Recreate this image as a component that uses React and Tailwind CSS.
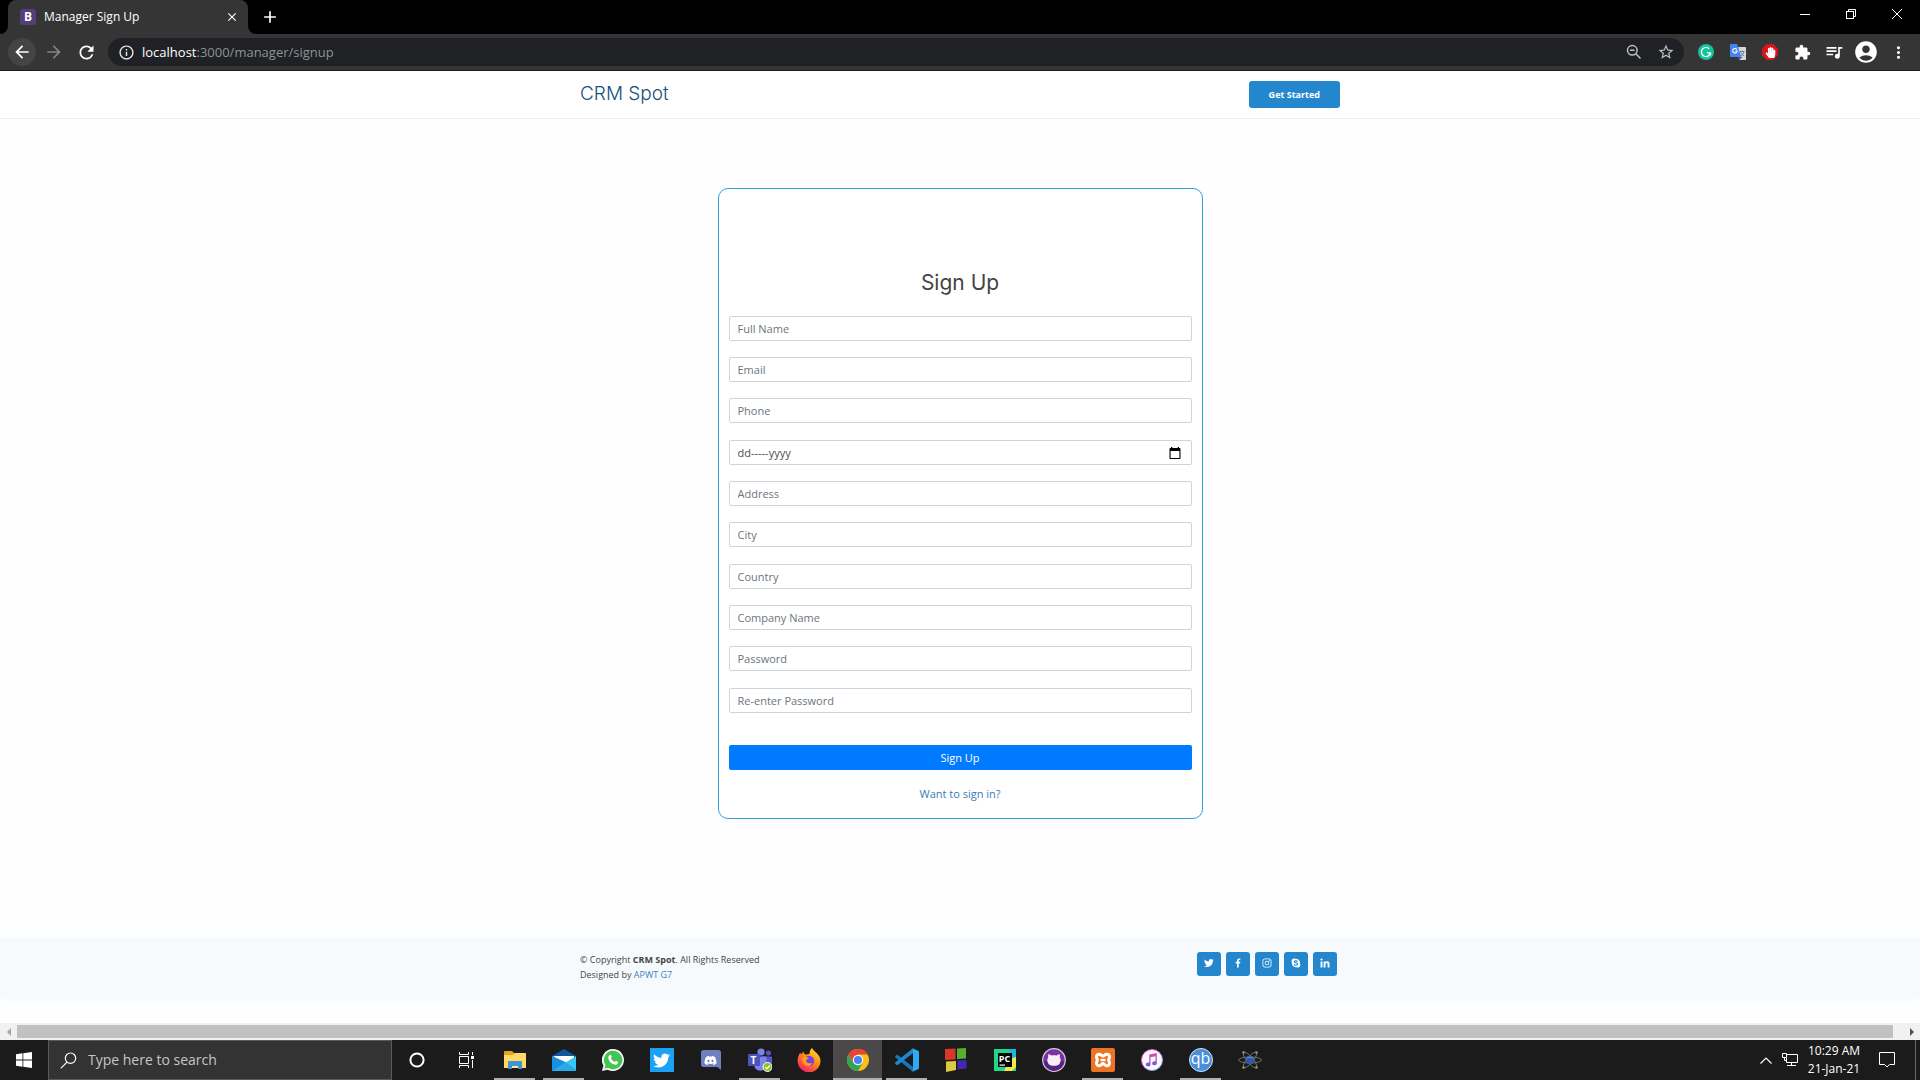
import React from "react";
import {
  MdAccountCircle,
  MdAdd,
  MdArrowBack,
  MdArrowForward,
  MdClose,
  MdExtension,
  MdInfoOutline,
  MdMoreVert,
  MdQueueMusic,
  MdRefresh,
  MdStarBorder,
} from "react-icons/md";
import {
  BiLogoFacebook,
  BiLogoInstagram,
  BiLogoLinkedin,
  BiLogoSkype,
  BiLogoTwitter,
} from "react-icons/bi";
import { FaTwitter, FaDiscord, FaHandPaper } from "react-icons/fa";

/* ---------- Browser window ---------- */

function RestoreIcon() {
  return (
    <svg width="10" height="10" viewBox="0 0 10 10" fill="none" stroke="currentColor">
      <path d="M2.5 2.5V.5h7v7h-2" />
      <rect x=".5" y="2.5" width="7" height="7" />
    </svg>
  );
}

function TabStrip() {
  return (
    <div className="flex h-[34px] items-start bg-black pl-2 text-white">
      <div className="relative flex h-full w-60 items-center rounded-t-lg bg-[#353535] pr-2 pl-3">
        <svg className="absolute bottom-0 -left-2" width="8" height="8" viewBox="0 0 8 8">
          <path d="M8 0v8H0a8 8 0 0 0 8-8z" fill="#353535" />
        </svg>
        <svg className="absolute -right-2 bottom-0" width="8" height="8" viewBox="0 0 8 8">
          <path d="M0 0v8h8a8 8 0 0 1-8-8z" fill="#353535" />
        </svg>
        <span className="flex h-4 w-4 items-center justify-center rounded-[3px] bg-[#563d7c] text-xs leading-4 font-bold">
          B
        </span>
        <span className="ml-2 flex-1 text-xs">Manager Sign Up</span>
        <button aria-label="Close tab" className="flex h-4 w-4 items-center justify-center">
          <MdClose size={14} />
        </button>
      </div>
      <button aria-label="New tab" className="ml-3 flex h-full w-5 items-center justify-center">
        <MdAdd size={20} />
      </button>
      <div className="ml-auto flex">
        <button aria-label="Minimize" className="flex h-7 w-[46px] items-center justify-center">
          <svg width="10" height="10" viewBox="0 0 10 10" stroke="currentColor">
            <path d="M0 5.5h10" />
          </svg>
        </button>
        <button aria-label="Restore" className="flex h-7 w-[46px] items-center justify-center">
          <RestoreIcon />
        </button>
        <button aria-label="Close" className="flex h-7 w-[46px] items-center justify-center">
          <svg width="10" height="10" viewBox="0 0 10 10" stroke="currentColor">
            <path d="M0 0l10 10M10 0L0 10" />
          </svg>
        </button>
      </div>
    </div>
  );
}

function ZoomOutIcon() {
  return (
    <svg width="16" height="16" viewBox="0 0 16 16" fill="none" stroke="currentColor" strokeWidth="1.500">
      <circle cx="6.300" cy="6.300" r="4.800" />
      <path d="M9.800 9.800l4.700 4.700M4 6.300h4.600" />
    </svg>
  );
}

function GrammarlyIcon() {
  return (
    <svg width="16" height="16" viewBox="0 0 16 16" fill="none">
      <circle cx="8" cy="8" r="8" fill="#15c39a" />
      <path d="M11.3 4.8A4.6 4.6 0 1 0 12.5 9M9 8.8h3.5v2.4" stroke="#fff" strokeWidth="1.3" />
    </svg>
  );
}

function TranslateIcon() {
  return (
    <svg width="16" height="16" viewBox="0 0 16 16">
      <path d="M6 3h9.3a.7.7 0 0 1 .7.7v11.6a.7.7 0 0 1-.7.7H9.500z" fill="#d5d8dc" />
      <path d="M9.500 16l3-3H8.600z" fill="#3a62b8" />
      <path d="M.7 0H7l4.500 13H.7a.7.7 0 0 1-.7-.7V.7A.7.7 0 0 1 .7 0z" fill="#4383f2" />
      <path d="M7 5.600A2.300 2.300 0 1 0 7.300 7H5.200" fill="none" stroke="#fff" strokeWidth="1.100" />
      <path d="M10 7.500h4.500M12.200 6.500v1M13.800 7.500c-.3 2-1.500 3.500-2.600 4.300M11 8.500c.7 1.600 1.800 2.600 3.200 3.500" fill="none" stroke="#6b7280" strokeWidth=".9" />
    </svg>
  );
}

function AdBlockIcon() {
  return (
    <span className="relative flex h-4 w-4 items-center justify-center">
      <svg className="absolute inset-0" width="16" height="16" viewBox="0 0 16 16">
        <path d="M4.700 0h6.600L16 4.700v6.600L11.300 16H4.700L0 11.300V4.700z" fill="#d8141c" />
      </svg>
      <FaHandPaper size={11} className="relative text-white" />
    </span>
  );
}

function Toolbar() {
  return (
    <div className="flex h-[37px] items-center border-b border-[#1f1b1c] bg-[#353535] pr-1.5 pl-2 text-white">
      <div className="flex items-center gap-1">
        <button aria-label="Back" className="flex h-7 w-7 items-center justify-center rounded-full bg-[#444444]">
          <MdArrowBack size={20} />
        </button>
        <button aria-label="Forward" className="flex h-7 w-7 items-center justify-center text-[#848484]">
          <MdArrowForward size={20} />
        </button>
        <button aria-label="Reload" className="flex h-7 w-7 items-center justify-center">
          <MdRefresh size={21} />
        </button>
      </div>
      <div className="ml-2 flex h-7 flex-1 items-center rounded-full bg-[#202124] pr-0.5 pl-2.5">
        <MdInfoOutline size={17} className="text-gray-200" />
        <p className="ml-[7px] flex-1 text-[13px] leading-5 text-[#8f9296]">
          <span className="text-white">localhost</span>:3000/manager/signup
        </p>
        <button aria-label="Zoom" className="flex w-8 justify-center text-[#bdc1c6]">
          <ZoomOutIcon />
        </button>
        <button aria-label="Bookmark this tab" className="flex w-8 justify-center text-[#bdc1c6]">
          <MdStarBorder size={18} />
        </button>
      </div>
      <div className="ml-1.5 flex items-center">
        <button aria-label="Grammarly" className="flex w-8 justify-center"><GrammarlyIcon /></button>
        <button aria-label="Google Translate" className="flex w-8 justify-center"><TranslateIcon /></button>
        <button aria-label="AdBlock" className="flex w-8 justify-center"><AdBlockIcon /></button>
        <button aria-label="Extensions" className="flex w-8 justify-center"><MdExtension size={17} /></button>
        <button aria-label="Media controls" className="flex w-8 justify-center"><MdQueueMusic size={20} /></button>
        <button aria-label="Profile" className="flex w-8 justify-center"><MdAccountCircle size={26} /></button>
        <button aria-label="Menu" className="flex w-8 justify-center"><MdMoreVert size={19} /></button>
      </div>
    </div>
  );
}

/* ---------- Web page ---------- */

const fields = [
  { name: "fullName", label: "Full Name", type: "text" },
  { name: "email", label: "Email", type: "email" },
  { name: "phone", label: "Phone", type: "tel" },
  { name: "birthDate", label: "dd-----yyyy", type: "date" },
  { name: "address", label: "Address", type: "text" },
  { name: "city", label: "City", type: "text" },
  { name: "country", label: "Country", type: "text" },
  { name: "company", label: "Company Name", type: "text" },
  { name: "password", label: "Password", type: "password" },
  { name: "passwordAgain", label: "Re-enter Password", type: "password" },
];

function DateField({ name, label }) {
  return (
    <div className="relative">
      <input
        name={name}
        type="text"
        aria-label="Date of birth"
        placeholder={label}
        className="block h-[25px] w-full rounded-xs border border-[#ced4da] bg-white px-2 text-[11px] leading-4 text-[#495057] placeholder:text-[#495057] placeholder:opacity-100"
      />
      <button type="button" aria-label="Open calendar" className="absolute top-1/2 right-[11px] -translate-y-1/2 text-black">
        <svg width="12" height="12" viewBox="0 0 12 12" fill="currentColor">
          <path d="M2 0h1.300v1h5.400V0H10v1h.5c.6 0 1 .4 1 1v9c0 .6-.4 1-1 1h-9c-.6 0-1-.4-1-1V2c0-.6.4-1 1-1H2zM1.600 4v6.900h8.800V4z" fillRule="evenodd" />
        </svg>
      </button>
    </div>
  );
}

function SignUpForm() {
  return (
    <form
      className="w-full max-w-[485px] rounded-[10px] border border-[#2da3e0] bg-white px-2.5 pt-20 pb-4"
      onSubmit={(event) => event.preventDefault()}
    >
      <h1 className="mb-[19px] text-center font-['Inter','Liberation_Sans',sans-serif] text-[21px] leading-7 text-[#444444]">
        Sign Up
      </h1>
      <div>
        {fields.map((field) => (
          <div key={field.name} className="mb-4 nth-[3n]:mb-[17px]">
            {field.type === "date" ? (
              <DateField name={field.name} label={field.label} />
            ) : (
              <input
                name={field.name}
                type={field.type}
                aria-label={field.label}
                placeholder={field.label}
                className="block h-[25px] w-full rounded-xs border border-[#ced4da] bg-white px-2 text-[11px] leading-4 text-[#495057] placeholder:text-[#6c757d] placeholder:opacity-100"
              />
            )}
          </div>
        ))}
      </div>
      <button type="submit" className="mt-8 block h-[25px] w-full rounded-xs bg-[#007bff] text-[11px] leading-4 text-white">
        Sign Up
      </button>
      <p className="mt-4 text-center text-[11px] leading-4">
        <a href="#signin" className="text-[#3b7ab5]">Want to sign in?</a>
      </p>
    </form>
  );
}

const socials = [
  { name: "Twitter", Icon: BiLogoTwitter },
  { name: "Facebook", Icon: BiLogoFacebook },
  { name: "Instagram", Icon: BiLogoInstagram },
  { name: "Skype", Icon: BiLogoSkype },
  { name: "LinkedIn", Icon: BiLogoLinkedin },
];

function WebPage() {
  return (
    <div className="flex flex-1 flex-col bg-[#fefefe]">
      <header className="border-b border-[#e6f2fb] bg-white">
        <div className="mx-auto flex h-[47px] max-w-[760px] items-center justify-between">
          <a href="#home" className="pb-0.5 font-['Inter','Liberation_Sans',sans-serif] text-[19px] leading-6 font-light text-[#16507b]">
            CRM Spot
          </a>
          <a href="#start" className="flex h-[27px] items-center rounded-[3px] bg-[#2487ce] px-5 text-[9px] leading-3 font-bold text-white">
            Get Started
          </a>
        </div>
      </header>
      <main className="flex flex-1 items-start justify-center pt-[69px]">
        <SignUpForm />
      </main>
      <footer className="mb-6 bg-[#f6fafd] shadow-[0_0_10px_#f6fafd]">
        <div className="mx-auto flex max-w-[760px] items-start justify-between pt-3.5 pr-[3px] pb-[17px]">
          <div className="text-[9px] leading-[15px] text-[#444444]">
            <p>© Copyright <strong className="font-bold">CRM Spot</strong>. All Rights Reserved</p>
            <p>Designed by <a href="#team" className="text-[#3b82c4]">APWT G7</a></p>
          </div>
          <div className="flex gap-[5px]">
            {socials.map(({ name, Icon }) => (
              <a key={name} href={"#" + name.toLowerCase()} aria-label={name} className="flex h-6 w-6 items-center justify-center rounded-[3px] bg-[#2487ce] pb-0.5 text-white">
                <Icon size={12} />
              </a>
            ))}
          </div>
        </div>
      </footer>
      <div className="flex h-[17px] items-center bg-[#f1f1f1]">
        <button aria-label="Scroll left" className="flex w-[17px] justify-center text-[#a3a3a3]">
          <svg width="4" height="8" viewBox="0 0 4 8" fill="currentColor"><path d="M4 0v8L0 4z" /></svg>
        </button>
        <div className="h-[13px] flex-1 bg-[#c1c1c1]" />
        <button aria-label="Scroll right" className="flex w-[27px] justify-end pr-1.5 text-[#505050]">
          <svg width="4" height="8" viewBox="0 0 4 8" fill="currentColor"><path d="M0 0v8l4-4z" /></svg>
        </button>
      </div>
    </div>
  );
}

/* ---------- Task bar ---------- */

function CortanaIcon() {
  return (
    <svg width="16" height="16" viewBox="0 0 16 16" fill="none">
      <circle cx="8" cy="8" r="6.600" stroke="#fff" strokeWidth="2" />
    </svg>
  );
}

function TaskViewIcon() {
  return (
    <svg width="16" height="16" viewBox="0 0 16 16" fill="none" stroke="#fff">
      <path d="M1.500 0v2.500h9V0M1.500 16v-2.500h9V16M1.500 4.500h9v7h-9zM14.500 0v3M14.500 8v8" />
      <path d="M13 4h3v3h-3z" fill="#fff" stroke="none" />
    </svg>
  );
}

function ExplorerIcon() {
  return (
    <svg width="22" height="20" viewBox="0 0 22 20">
      <path d="M0 2a1 1 0 0 1 1-1h7l2 2h11a1 1 0 0 1 1 1v3H0z" fill="#e0a816" />
      <path d="M0 5h9l2-2h10a1 1 0 0 1 1 1v14H0z" fill="#ffd868" />
      <path d="M4 12a1 1 0 0 1 1-1h12a1 1 0 0 1 1 1v7h-4v-3H8v3H4z" fill="#3d95d6" />
      <path d="M8 16h6v2H8z" fill="#ffe9a8" />
    </svg>
  );
}

function MailIcon() {
  return (
    <svg width="24" height="22" viewBox="0 0 24 22">
      <path d="M0 7l12-7 12 7v3H0z" fill="#11559c" />
      <path d="M2 7h20v9H2z" fill="#fff" />
      <path d="M0 7l12 7.500L24 7v14a1 1 0 0 1-1 1H1a1 1 0 0 1-1-1z" fill="#38c6f4" />
      <path d="M0 7v14l.6 1L14 13.200z" fill="#1b8fdc" />
      <path d="M.6 22L14 13.200 24 21l-1 1z" fill="#27a9ea" />
    </svg>
  );
}

function WhatsAppIcon() {
  return (
    <span className="relative flex h-[22px] w-[22px] items-center justify-center">
      <svg className="absolute inset-0" width="22" height="22" viewBox="0 0 22 22">
        <path d="M11 0a11 11 0 1 1-5.200 20.700L0 22l1.400-5.500A11 11 0 0 1 11 0z" fill="#f4f4f4" />
        <path d="M11 1.800a9.200 9.200 0 1 1-4.800 17L2.500 19.700l1-3.600A9.200 9.200 0 0 1 11 1.800z" fill="#43c553" />
      </svg>
      <svg className="relative" width="12" height="12" viewBox="0 0 12 12">
        <path d="M3 .8c.6-.4 1 0 1.200.5l.6 1.500c.1.5-.7 1-.8 1.400.7 1.600 2 2.900 3.700 3.600.5-.1 1-1 1.400-.9l1.800.9c.3.2.2 1-.1 1.600-.6 1-2 1.500-3.300 1.200C4.300 9.800 1.900 7.400 1.300 4.300 1 2.800 1.900 1.500 3 .8z" fill="#fff" />
      </svg>
    </span>
  );
}

function TwitterTile() {
  return (
    <span className="flex h-6 w-6 items-center justify-center bg-[#1da1f2] text-white">
      <FaTwitter size={17} />
    </span>
  );
}

function DiscordIcon() {
  return (
    <span className="relative flex h-5 w-5 items-center justify-center">
      <svg className="absolute inset-0" width="20" height="20" viewBox="0 0 20 20">
        <path d="M2.500 0h15A2.500 2.500 0 0 1 20 2.500V20l-3.500-3h-14A2.500 2.500 0 0 1 0 14.500v-12A2.500 2.500 0 0 1 2.500 0z" fill="#6f7fbf" />
      </svg>
      <FaDiscord size={13} className="relative text-white" />
    </span>
  );
}

function TeamsIcon() {
  return (
    <span className="relative block h-6 w-6">
      <svg width="24" height="24" viewBox="0 0 24 24">
        <circle cx="13" cy="4" r="3.600" fill="#7b83eb" />
        <circle cx="20.500" cy="5" r="2.500" fill="#5059c9" />
        <path d="M14 8.500h10v7a5 5 0 0 1-8 3.500z" fill="#5059c9" />
        <path d="M6 8.500h12.500v8a6.200 6.200 0 0 1-12.500 0z" fill="#7b83eb" />
        <rect y="6" width="12" height="12" rx="1" fill="#4b53bc" />
        <circle cx="19.500" cy="19" r="4.500" fill="#8bc220" stroke="#fff" />
        <path d="M17.300 19l1.700 1.700 3-3.200" fill="none" stroke="#fff" strokeWidth="1.300" />
      </svg>
      <span className="absolute top-1.5 left-0 w-3 text-center text-[10px] leading-3 font-bold text-white">T</span>
    </span>
  );
}

function FirefoxIcon() {
  return (
    <svg width="24" height="24" viewBox="0 0 24 24">
      <defs>
        <linearGradient id="ffBody" x1="0.8" y1="0" x2="0.2" y2="1">
          <stop offset="0" stopColor="#ffe226" />
          <stop offset=".45" stopColor="#ff8a16" />
          <stop offset="1" stopColor="#f5156c" />
        </linearGradient>
      </defs>
      <path d="M15 0c1 2 2.500 3 4 4.500C21 6.500 23.500 9 23.500 13a11.400 11.400 0 0 1-22.900 0C.6 9 2 6.500 3.500 4.500c0 1 .2 1.600.6 2L6.500 3.500c0 1.500.7 2.500 2 3 2 0 3-.5 4-.5 0-2 .7-4.500 2.500-6z" fill="url(#ffBody)" />
      <circle cx="12" cy="13" r="5.200" fill="#7542e5" />
      <path d="M5.500 10c2-2 4.500-1.500 6.500.5-1.500.3-2.800 1-3 2.500 1 2.500 4 3 6.500 1.500-1 3.500-5 4.500-7.500 2.800C5.500 15.700 4.800 12.500 5.500 10z" fill="#ff9a1f" />
    </svg>
  );
}

function ChromeIcon() {
  return (
    <svg width="22" height="22" viewBox="0 0 22 22">
      <circle cx="11" cy="11" r="11" fill="#fbc116" />
      <path d="M1.470 5.500L6.240 13.750 11 16l4.760-2.250L11 22A11 11 0 0 1 1.470 5.500z" fill="#34a353" />
      <path d="M1.470 5.500A11 11 0 0 1 20.530 5.500H11L6.240 13.750z" fill="#ea4335" />
      <circle cx="11" cy="11" r="5.200" fill="#fff" />
      <circle cx="11" cy="11" r="4.100" fill="#4285f4" />
    </svg>
  );
}

function CodeIcon() {
  return (
    <svg width="24" height="24" viewBox="0 0 24 24">
      <path d="M0 8.500L1.700 7c.3-.2.700-.2 1 0L18 19v4.700L1 10c-.6-.5-1-1-1-1.500z" fill="#1478bd" />
      <path d="M0 15.500L1.700 17c.3.200.7.200 1 0L18 5V.3L.8 14c-.5.500-.8 1-.8 1.500z" fill="#1d8ad0" />
      <path d="M17.500.2L23 2.800c.6.300 1 .8 1 1.500v15.400c0 .7-.4 1.200-1 1.500l-5.500 2.600c-.7.300-1.400 0-1.800-.4.800.6 2.300.2 2.300-1V1.600c0-1.200-1.500-1.700-2.300-1 .4-.5 1.100-.7 1.800-.4z" fill="#2fa9f2" />
    </svg>
  );
}

function BlocksIcon() {
  return (
    <svg width="22" height="24" viewBox="0 0 22 24">
      <path d="M0 1l10.500-.500v11L0 12z" fill="#d8382c" />
      <path d="M12 .5L21 0v10.500L12 11z" fill="#55b030" />
      <path d="M1 13.500l10-.5v9L1 24z" fill="#dccb3e" />
      <path d="M12.500 12.500l9-.5v8.500l-9 1z" fill="#4526b8" />
    </svg>
  );
}

function PyCharmIcon() {
  return (
    <span className="relative block h-[22px] w-[22px]">
      <svg width="22" height="22" viewBox="0 0 22 22">
        <path d="M0 0h22v22H0z" fill="#21d789" />
        <path d="M15 0h7v8l-6 4z" fill="#1fb6d9" />
        <path d="M22 8v10l-4 4h-8l6-12z" fill="#f5e94a" />
        <path d="M4 4h14v14H4z" fill="#050505" />
        <path d="M5.500 15.500h5.500v1.200H5.500z" fill="#fff" />
      </svg>
      <span className="absolute top-[5px] left-1 w-3.5 text-center text-[9px] leading-[9px] font-bold text-white">PC</span>
    </span>
  );
}

function GitHubDesktopIcon() {
  return (
    <svg width="24" height="24" viewBox="0 0 24 24">
      <circle cx="12" cy="12" r="11.300" fill="#7a35a5" stroke="#d9c8e6" strokeWidth="1.200" />
      <path d="M2 13h20a10 10 0 0 1-20 0z" fill="#58237f" />
      <path d="M6.500 6l3 1.500c1.600-.4 3.400-.4 5 0l3-1.500c.5 1.200.5 2.300.2 3.200 1.500 2 1.300 5-.5 7-2.500 2-7.900 2-10.400 0-1.800-2-2-5-.5-7C6 8.300 6 7.200 6.500 6z" fill="#f7eefc" />
    </svg>
  );
}

function XamppIcon() {
  return (
    <svg width="24" height="24" viewBox="0 0 24 24" fill="none">
      <rect width="24" height="24" rx="2" fill="#ee7322" />
      <path d="M8.300 6.300c2 0 2.400 1.700 3.700 1.700s1.700-1.700 3.700-1.700A2.800 2.800 0 0 1 18.500 9c0 1.300-.8 2-.8 3s.8 1.700.8 3a2.800 2.800 0 0 1-2.800 2.700c-2.200 0-2.200-2.200-3.700-2.200s-1.500 2.200-3.700 2.200A2.800 2.800 0 0 1 5.500 15c0-1.300.8-2 .8-3s-.8-1.700-.8-3a2.800 2.800 0 0 1 2.800-2.700z" stroke="#fff" strokeWidth="3" />
      <path d="M9.500 12h5" stroke="#fff" strokeWidth="2.400" />
    </svg>
  );
}

function ITunesIcon() {
  return (
    <svg width="22" height="22" viewBox="0 0 22 22">
      <defs>
        <linearGradient id="itRing" x1="0" y1="0" x2="1" y2="1">
          <stop offset="0" stopColor="#fb4d8a" />
          <stop offset=".5" stopColor="#c77df0" />
          <stop offset="1" stopColor="#4cc6f5" />
        </linearGradient>
        <linearGradient id="itNote" x1="0" y1="0" x2="0" y2="1">
          <stop offset="0" stopColor="#e0489c" />
          <stop offset="1" stopColor="#5a62e0" />
        </linearGradient>
      </defs>
      <circle cx="11" cy="11" r="10.500" fill="#fdf7fc" stroke="url(#itRing)" />
      <path d="M8.300 5.500l7.500-1.500v10.200a2.300 1.900 0 1 1-1.300-1.700V7.300l-5 1v7.200a2.300 1.900 0 1 1-1.200-1.700z" fill="url(#itNote)" />
    </svg>
  );
}

function QbIcon() {
  return (
    <span className="flex h-6 w-6 items-center justify-center rounded-full border border-[#cfe3f7] bg-[#4a90d9] pb-1 text-base leading-5 text-white">
      qb
    </span>
  );
}

function AtomIcon() {
  return (
    <svg width="24" height="20" viewBox="0 0 24 20" fill="none" stroke="#7d8274" strokeWidth=".8">
      <ellipse cx="12" cy="10" rx="11.500" ry="3" />
      <ellipse cx="12" cy="10" rx="10" ry="3" transform="rotate(50 12 10)" />
      <ellipse cx="12" cy="10" rx="10" ry="3" transform="rotate(-50 12 10)" />
      <ellipse cx="12" cy="10" rx="5.200" ry="4.200" fill="#34589f" stroke="none" />
      <path d="M8.500 8.500c2-1.800 5-1.800 7 0" stroke="#86a5d8" />
      <g fill="#a89b6c" stroke="none">
        <circle cx="5.500" cy="2.500" r="1.200" />
        <circle cx="18.500" cy="2.500" r="1.200" />
        <circle cx="5.500" cy="17.500" r="1.200" />
        <circle cx="18.500" cy="17.500" r="1.200" />
      </g>
    </svg>
  );
}

const apps = [
  { name: "Cortana", Icon: CortanaIcon },
  { name: "Task View", Icon: TaskViewIcon },
  { name: "File Explorer", Icon: ExplorerIcon, open: true },
  { name: "Mail", Icon: MailIcon, open: true },
  { name: "WhatsApp", Icon: WhatsAppIcon },
  { name: "Twitter", Icon: TwitterTile },
  { name: "Discord", Icon: DiscordIcon },
  { name: "Microsoft Teams", Icon: TeamsIcon, open: true },
  { name: "Firefox", Icon: FirefoxIcon },
  { name: "Google Chrome", Icon: ChromeIcon, open: true, active: true },
  { name: "Visual Studio Code", Icon: CodeIcon, open: true },
  { name: "CodeBlocks", Icon: BlocksIcon },
  { name: "PyCharm", Icon: PyCharmIcon },
  { name: "GitHub Desktop", Icon: GitHubDesktopIcon },
  { name: "XAMPP", Icon: XamppIcon, open: true },
  { name: "iTunes", Icon: ITunesIcon },
  { name: "qBittorrent", Icon: QbIcon, open: true },
  { name: "Atom", Icon: AtomIcon },
];

function TaskButton({ name, Icon, open, active }) {
  return (
    <button
      aria-label={name}
      className={
        "relative flex h-10 w-[49px] items-center justify-center " + (active ? "bg-[#4a4848]" : "")
      }
    >
      <Icon />
      {open && (
        <span
          className={
            "absolute bottom-0 h-0.5 bg-[#b5aeae] " + (active ? "inset-x-0" : "inset-x-1")
          }
        />
      )}
    </button>
  );
}

function TaskBar() {
  return (
    <div className="flex h-10 items-stretch bg-[#1c1b1b] text-white">
      <button aria-label="Start" className="flex w-12 items-center justify-center">
        <svg width="16" height="16" viewBox="0 0 16 16" fill="#fff">
          <path d="M0 2.200L6.500 1.300v6.300H0zM7.300 1.200L16 0v7.600H7.300zM0 8.400h6.500v6.300L0 13.800zM7.300 8.400H16V16l-8.700-1.200z" />
        </svg>
      </button>
      <label className="flex w-[344px] items-center border border-[#5a5a5a] bg-[#333333] pl-[11px]">
        <svg width="17" height="17" viewBox="0 0 17 17" fill="none" stroke="#fff" strokeWidth="1.200">
          <circle cx="10.500" cy="6.200" r="5.200" />
          <path d="M7 10.200L.8 16.400" />
        </svg>
        <input
          type="text"
          aria-label="Type here to search"
          placeholder="Type here to search"
          className="ml-[11px] min-w-0 flex-1 bg-transparent text-sm leading-5 placeholder:text-[#c6c6c6] placeholder:opacity-100"
        />
      </label>
      <div className="flex">
        {apps.map((app) => (
          <TaskButton key={app.name} {...app} />
        ))}
      </div>
      <div className="ml-auto flex items-center">
        <button aria-label="Show hidden icons" className="flex w-6 justify-center">
          <svg width="12" height="7" viewBox="0 0 12 7" fill="none" stroke="#fff" strokeWidth="1.200">
            <path d="M.5 6.500L6 1l5.500 5.500" />
          </svg>
        </button>
        <button aria-label="Network" className="flex w-6 justify-center">
          <svg width="16" height="14" viewBox="0 0 16 14" fill="none" stroke="#fff">
            <path d="M4.500 1.500h11v8H4.500V5M9.500 9.500v3M5 12.500h9" />
            <path d="M.5.500h4v4h-4zM2.500 4.500v3h2" />
          </svg>
        </button>
        <div className="w-16 text-center text-xs leading-[18px]">
          <p>10:29 AM</p>
          <p>21-Jan-21</p>
        </div>
        <button aria-label="Notifications" className="flex w-[42px] justify-center">
          <svg width="16" height="16" viewBox="0 0 16 16" fill="none" stroke="#fff">
            <path d="M.5.500h15v12h-5L8 15l-2.500-2.500h-5z" />
          </svg>
        </button>
        <div className="mr-1 ml-[7px] h-10 w-px bg-[#6a6a6a]" />
      </div>
    </div>
  );
}

export default function App() {
  return (
    <div className="flex min-h-screen flex-col font-['Open_Sans','Noto_Sans',sans-serif]">
      <TabStrip />
      <Toolbar />
      <WebPage />
      <TaskBar />
    </div>
  );
}
